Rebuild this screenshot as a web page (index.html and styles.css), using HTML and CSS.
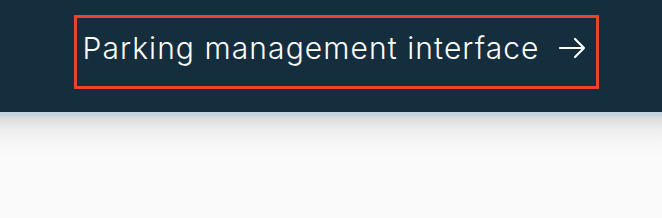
FILE: index.html
```html
<!DOCTYPE html>
<html>
<head>
<meta charset="utf-8">
<link rel="stylesheet" href="styles.css">
</head>
<body>
<header class="topbar">
  <a class="cta" href="#">
    <span class="cta-label">Parking management interface</span>
    <svg class="cta-arrow" width="28" height="22" viewBox="0 0 28 22" fill="none" stroke="#fff" stroke-width="2.2" stroke-linecap="round" stroke-linejoin="round">
      <path d="M2 11 H26 M17 2 L26 11 L17 20"/>
    </svg>
  </a>
</header>
<div class="divider"></div>
<main class="content"></main>
</body>
</html>
```
FILE: styles.css
```css
* { box-sizing: border-box; }
html, body { margin: 0; padding: 0; }
body {
  background: #fafafa;
  font-family: Inter, "Noto Sans", sans-serif;
  height: 218px;
  overflow: hidden;
}
.topbar {
  height: 112px;
  background: #152e3e;
  display: flex;
  justify-content: center;
  align-items: flex-start;
  padding-top: 15px;
  padding-left: 11px;
}
.cta {
  display: flex;
  align-items: center;
  gap: 18px;
  height: 74px;
  padding: 0 10px 9px 5px;
  border: 3px solid #e8432b;
  color: #fff;
  text-decoration: none;
}
.cta-label {
  font-size: 30px;
  font-weight: 350;
  letter-spacing: 1.08px;
  line-height: 1;
}
.cta-arrow { display: block; }
.divider {
  height: 4px;
  background: #c4d4dd;
}
.content {
  height: 102px;
  background: linear-gradient(to bottom, #d9d9d9 0px, #eeeeee 14px, #f7f7f7 28px, #fafafa 42px);
}
```
